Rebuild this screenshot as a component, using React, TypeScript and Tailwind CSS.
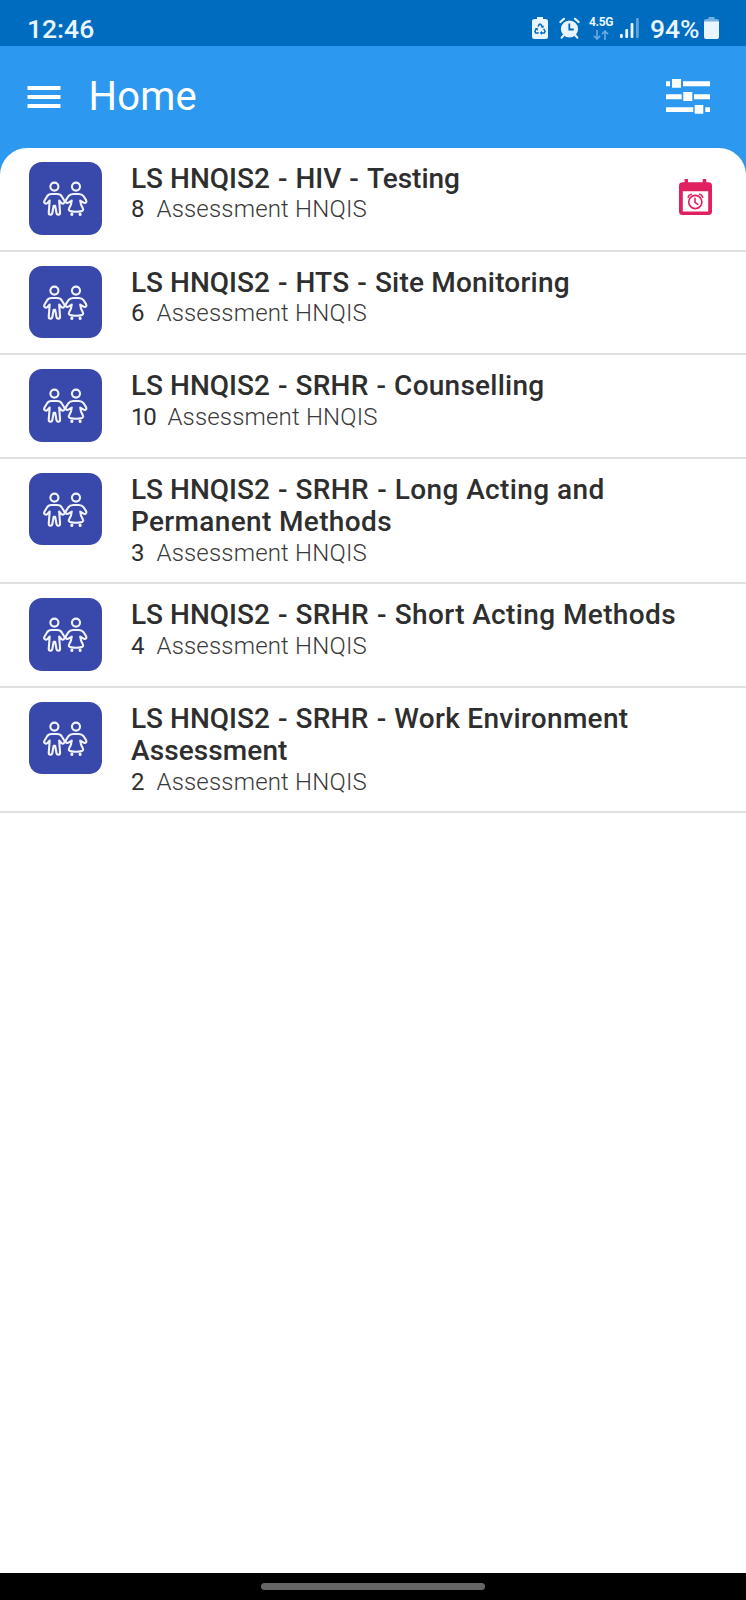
import { Fragment } from 'react';

type Line = { parts: string[]; tracking: string };
type Program = { lines: Line[]; count: number; scheduled?: boolean };

const programs: Program[] = [
  { lines: [{ parts: ['LS HNQIS2', 'HIV', 'Testing'], tracking: 'tracking-[0px]' }], count: 8, scheduled: true },
  { lines: [{ parts: ['LS HNQIS2', 'HTS', 'Site Monitoring'], tracking: 'tracking-[0.2px]' }], count: 6 },
  { lines: [{ parts: ['LS HNQIS2', 'SRHR', 'Counselling'], tracking: 'tracking-[0.25px]' }], count: 10 },
  {
    lines: [
      { parts: ['LS HNQIS2', 'SRHR', 'Long Acting and'], tracking: 'tracking-[0.4px]' },
      { parts: ['Permanent Methods'], tracking: 'tracking-[0.35px]' },
    ],
    count: 3,
  },
  { lines: [{ parts: ['LS HNQIS2', 'SRHR', 'Short Acting Methods'], tracking: 'tracking-[0.38px]' }], count: 4 },
  {
    lines: [
      { parts: ['LS HNQIS2', 'SRHR', 'Work Environment'], tracking: 'tracking-[0.3px]' },
      { parts: ['Assessment'], tracking: 'tracking-[0.1px]' },
    ],
    count: 2,
  },
];

function CoupleIcon() {
  return (
    <svg className="size-full" viewBox="0 0 72 72" fill="none" stroke="#f1f2fb" strokeWidth="2.1" strokeLinecap="round" strokeLinejoin="round">
      <circle cx="25.2" cy="24.4" r="4" />
      <circle cx="46.6" cy="24.4" r="4" />
      <path d="M22.400 31.800h5.600c2.400 0 3.800.9 4.700 2.600l2.400 4c1.100 2.100-1.300 3.800-3 2.200l-2.200-2.400.9 11.900c.1 2.800-3.300 2.900-3.600.2l-1.200-6.800h-1.600l-1.200 6.800c-.3 2.700-3.700 2.600-3.600-.2l.9-11.900-2.200 2.400c-1.700 1.600-4.100-.1-3-2.200l2.400-4c.9-1.700 2.300-2.600 4.700-2.600z" />
      <path d="M43.800 31.800h5.600c2.300 0 3.700.8 4.900 2.400l2.300 3.600c1.100 2.100-1.100 3.600-2.900 2.300L50.800 38.200c.2 3 1.200 5.600 2.500 7.600.9 1.500.3 2.600-1.200 2.900-3.600.8-7.400.8-11 0-1.500-.3-2.100-1.400-1.200-2.900 1.300-2 2.300-4.600 2.500-7.600l-2.900 1.900c-1.800 1.300-4-.2-2.900-2.300l2.300-3.600c1.200-1.600 2.600-2.400 4.900-2.400z" />
      <path d="M42.500 51.600v.5M50.700 51.600v.5" strokeWidth="3" />
    </svg>
  );
}

function CalendarAlarmIcon() {
  return (
    <svg className="h-9 w-[33px]" viewBox="0 0 33 36" fill="none">
      <path fill="#e0205f" fillRule="evenodd" d="M5.500 0H9v3.300h14.700V0h3.500v3.300h2.300A3.500 3.500 0 0 1 33 6.800v26A3.500 3.500 0 0 1 29.500 36h-26A3.500 3.500 0 0 1 0 32.800v-26a3.500 3.500 0 0 1 3.500-3.500h2zM3.800 12.300v20.100h25.400V12.300z" />
      <g stroke="#e0205f" strokeWidth="1.600" strokeLinecap="round">
        <circle cx="16.300" cy="23" r="6.600" />
        <path d="M16 19.400v4l2.800 2M9.200 18.200c.3-1.500 1.500-2.500 3.100-2.900M23.600 18.200c-.3-1.500-1.500-2.500-3.100-2.900" />
      </g>
    </svg>
  );
}

function StatusIcons() {
  return (
    <div className="flex h-full items-start text-[#eaf6ff]">
      <svg className="mt-[17px] h-[22px] w-4" viewBox="0 0 16 22">
        <path fill="currentColor" d="M5 0h6v2h2.500A2.500 2.500 0 0 1 16 4.500v15a2.500 2.500 0 0 1-2.500 2.500h-11A2.500 2.500 0 0 1 0 19.500v-15A2.500 2.500 0 0 1 2.500 2H5z" />
        <path fill="none" stroke="#006cbf" strokeWidth="1.500" d="M6 9.500 7.400 7.200h1.300l1.600 2.700M11.700 11.800l1.400 2.500-.8 1.700H9.400M6.800 16H3.800l-.9-1.600 1.500-2.700" />
        <path fill="#006cbf" d="m11.700 8.200-.3 3-2.700-1.300zM10 13.800v4.300L7.800 16zM2.600 11.600l3-.8.5 3z" />
      </svg>
      <svg className="ml-[11px] mt-[17px] h-[22px] w-[21px]" viewBox="0 0 21 22">
        <circle cx="10.500" cy="12" r="8.600" fill="currentColor" />
        <path fill="none" stroke="currentColor" strokeWidth="2.200" strokeLinecap="round" d="M1.400 5 5 1.800M19.600 5 16 1.800M4.500 18.500 2.700 20.600M16.500 18.500l1.800 2.100" />
        <path fill="none" stroke="#006cbf" strokeWidth="1.800" d="M10.300 6.500v6h4.500" />
      </svg>
      <div className="ml-[9px] mt-[16px] flex w-6 flex-col items-center">
        <span className="whitespace-nowrap text-[12px] font-bold leading-[13px] tracking-[-0.3px]">4.5G</span>
        <svg className="mt-[1px] h-[10px] w-4" viewBox="0 0 16 10" fill="none" stroke="#69aee3" strokeWidth="1.600">
          <path d="M4 0v9M.8 5.700 4 9l3.200-3.300M12 10V1M8.800 4.300 12 1l3.200 3.300" />
        </svg>
      </div>
      <svg className="ml-[7px] mt-[18px] h-5 w-[19px]" viewBox="0 0 19 20" fill="currentColor">
        <rect y="16" width="2.800" height="4" rx="1" />
        <rect x="5.300" y="11" width="2.800" height="9" rx="1" />
        <rect x="10.600" y="5" width="2.800" height="15" rx="1" />
        <rect x="16" width="2.800" height="20" rx="1" opacity=".4" />
      </svg>
      <span className="ml-[11px] mt-[15px] w-[54px] whitespace-nowrap text-[26.5px] font-medium leading-[28px]">94%</span>
      <svg className="mt-[17px] h-[22px] w-[15px]" viewBox="0 0 15 22" fill="currentColor">
        <path opacity=".5" d="M4.500 0h6v2H13a2 2 0 0 1 2 2v1H0V4a2 2 0 0 1 2-2h2.500z" />
        <path d="M0 4.500h15V20a2 2 0 0 1-2 2H2a2 2 0 0 1-2-2z" />
      </svg>
    </div>
  );
}

function Title({ line }: { line: Line }) {
  return (
    <span className={`block whitespace-nowrap ${line.tracking}`}>
      {line.parts.map((part, i) => (
        <Fragment key={part}>
          {i > 0 && <span className="inline-block w-[25.6px] text-center tracking-normal"> - </span>}
          {i === 0 && line.parts.length > 1 ? <span className="tracking-normal">{part}</span> : part}
        </Fragment>
      ))}
    </span>
  );
}

export default function App() {
  return (
    <div className="flex h-[1600px] w-[746px] flex-col overflow-hidden bg-[#2d98ef] font-['Roboto',sans-serif]">
      <div className="flex h-[46px] shrink-0 items-start justify-between bg-[#006cbf] pl-[27px] pr-[27px]">
        <span className="mt-[15px] text-[26.5px] font-medium leading-[28px] text-[#eaf6ff]">12:46</span>
        <StatusIcons />
      </div>

      <header className="flex h-[102px] shrink-0 items-center pl-[27px] pr-9 text-white">
        <svg className="h-[22px] w-[34px]" viewBox="0 0 34 22" fill="currentColor">
          <path d="M.5 0h33v4H.5zM.5 9h33v4H.5zM.5 18h33v4H.5z" />
        </svg>
        <h1 className="ml-[27.5px] flex-1 text-[40px] leading-[48px] tracking-[0.2px]">Home</h1>
        <svg className="mb-[2px] h-[35px] w-11" viewBox="0 0 44 35" fill="currentColor">
          <path d="M0 2.300h4v4.900H0zM6 0h9v8.700H6zM17 2.300h27v4.900H17zM0 15.300h15.700v4.900H0zM17.300 13h9v9h-9zM28 15.300h16v4.900H28zM0 28.200h27.300v4.900H0zM28.700 26h8.600v8.700h-8.600zM39.300 28.200H44v4.900h-4.700z" />
        </svg>
      </header>

      <main className="flex-1 rounded-t-[27px] bg-white">
        {programs.map((program) => (
          <article
            key={program.lines[0].parts.join()}
            className="flex items-start border-b-2 border-[#e0e0e0] pl-[29px] pr-[34px] pt-[14px] text-[#2e2e2e]"
          >
            <div className="size-[72.600px] shrink-0 overflow-hidden rounded-[13px] bg-[#3949ab]">
              <CoupleIcon />
            </div>
            <div className="ml-[29.400px] min-h-[87.600px] flex-1 pb-[15.700px] pt-px">
              <h2 className="text-[28px] font-medium leading-[32.400px]">
                {program.lines.map((line) => (
                  <Title key={line.parts.join()} line={line} />
                ))}
              </h2>
              <p className="flex gap-[12px] text-[24px] leading-[28px]">
                <span className={program.count > 9 ? 'tracking-[-1.3px]' : ''}>{program.count}</span>
                <span className="font-light tracking-[0.185px] text-[#3a3a3a]">Assessment HNQIS</span>
              </p>
            </div>
            {program.scheduled && (
              <div className="mt-[17px]">
                <CalendarAlarmIcon />
              </div>
            )}
          </article>
        ))}
      </main>

      <footer className="flex h-[27px] shrink-0 items-center justify-center bg-black">
        <div className="h-[7px] w-[224px] rounded-full bg-[#666666]" />
      </footer>
    </div>
  );
}
